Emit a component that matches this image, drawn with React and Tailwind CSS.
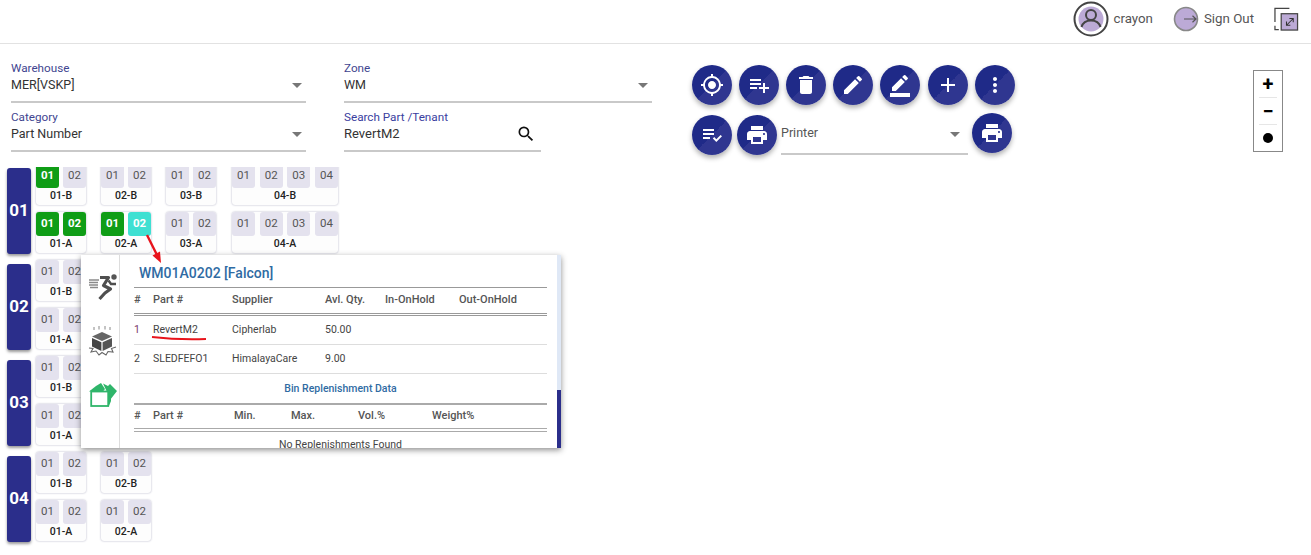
import React from "react";
import { MdGpsFixed, MdPlaylistAdd, MdDelete, MdEdit, MdBorderColor, MdAdd, MdMoreVert, MdPlaylistAddCheck, MdPrint, MdSearch, MdArrowDropDown } from "react-icons/md";

const F = "font-['Roboto',sans-serif]";

function RoundBtn({ icon: Icon, size = 24, cls = "" }) {
  return (
    <button className={`w-10 h-10 shrink-0 rounded-full flex items-center justify-center text-white bg-[linear-gradient(135deg,#1f2a88_0%,#1f2a88_50%,#2f3690_50%,#2f3690_100%)] shadow-[0_3px_5px_rgba(0,0,0,0.3)] ${cls}`}>
      <Icon size={size} />
    </button>
  );
}

function Field({ label, value, width, arrow = true, search = false, labelCls = "text-[#3f4590]", valueCls = "text-[12.5px]" }) {
  return (
    <div className={`${width} h-[42px] border-b-2 border-[#c9c9c9]`}>
      <div className={`text-[11.7px] leading-[14px] ${labelCls}`}>{label}</div>
      <div className={`flex items-center justify-between h-[18px] leading-[18px] text-[#333] mt-px ${valueCls}`}>
        <span>{value}</span>
        {arrow && <MdArrowDropDown size={24} className="text-[#777] -mr-[3px]" />}
        {search && <MdSearch size={20} className="text-[#111] mr-[5px]" />}
      </div>
    </div>
  );
}

function Cell({ v, state }) {
  const c =
    state === "g"
      ? "bg-[#0f9d16] text-white font-bold"
      : state === "c"
      ? "bg-[#3fe0d2] text-white font-bold"
      : "bg-[#e4e2ee] text-[#555]";
  return <div className={`w-[23px] h-6 rounded-[3px] flex items-center justify-center text-[11.5px] ${c}`}>{v}</div>;
}

function Rack({ name, cells, states = {} }) {
  return (
    <div className="h-[41px] rounded-[3px] shadow-[0_0_2px_rgba(60,60,110,0.45)] bg-[#fdfdfd]">
      <div className="flex justify-between">
        {cells.map((v) => (
          <Cell key={v} v={v} state={states[v]} />
        ))}
      </div>
      <div className="text-center text-[10.5px] font-medium leading-[16px] text-[#222]">{name}</div>
    </div>
  );
}

const two = ["01", "02"];
const four = ["01", "02", "03", "04"];

function Aisle({ id, columns }) {
  return (
    <div className="flex h-[90px] mb-[6px] pl-[7px]">
      <div className="w-6 h-[86px] self-end rounded-[3px] bg-[#2b2e8b] text-white font-bold text-[17px] flex items-center justify-center shadow-[0_2px_3px_rgba(0,0,0,0.4)]">
        {id}
      </div>
      <div className="ml-[5px] flex">
        {columns.map((c, i) => (
          <div key={i} className={`flex flex-col gap-[7px] ${c.w} ${c.ml}`}>
            <Rack name={c.b} cells={c.cells} states={c.bs} />
            <Rack name={c.a} cells={c.cells} states={c.as} />
          </div>
        ))}
      </div>
    </div>
  );
}

const col = (n, extra = {}) => ({ b: `${n}-B`, a: `${n}-A`, cells: two, w: "w-[50px]", ml: n === "01" ? "ml-0" : "ml-[15px]", ...extra });

function Runner() {
  return (
    <svg width="30" height="30" viewBox="0 0 30 30" fill="none">
      <circle cx="26" cy="5" r="2.7" fill="#555" />
      <path d="M12 5.5 H20.5 L15.5 13.5 L22.5 17 L17 21 L11.5 27" stroke="#4f4f4f" strokeWidth="3.2" strokeLinejoin="round" />
      <path d="M20.5 8.5 L23 12 H28" stroke="#4f4f4f" strokeWidth="2.4" />
      <path d="M1 8h10M1 10.5h9M1 13h9M2 15.5h8" stroke="#8a8a8a" strokeWidth="1.4" />
    </svg>
  );
}

function BreakBox() {
  return (
    <svg width="30" height="30" viewBox="0 0 30 30" fill="none">
      <path d="M14 6 L24 10.5 L14 15 L4 10.5 Z" fill="#666" />
      <path d="M4 12 L13.4 16.2 V25 L4 20.5 Z" fill="#454545" />
      <path d="M24 12 L14.6 16.2 V25 L24 20.5 Z" fill="#555" />
      <path d="M6 1v3M11 0v3.5M17 0v3.5M22 1v3" stroke="#888" strokeWidth="1" />
      <path d="M1 22 L5 22.5 L3 26 L8 25 L11 29 L14 26.5 L18 29 L20 25.5 L25 26 L23.5 22.5 L28 21" stroke="#666" strokeWidth="1.1" />
    </svg>
  );
}

function GreenBox() {
  return (
    <svg width="30" height="27" viewBox="0 0 30 27" fill="none">
      <path d="M1 9.5 L8 4 L13 1 L17 7 L15 9.5 Z" fill="#2fb56a" />
      <path d="M15 1.5 L20 4 L22 2 L29 9 L22 18 L19 10 Z" fill="#2fb56a" />
      <rect x="3.2" y="9.5" width="17" height="14.5" fill="#fff" stroke="#2fb56a" strokeWidth="1.8" />
      <path d="M21 14 L23 15 V19 L21 24 Z" fill="#2fb56a" />
    </svg>
  );
}

const cols1 = "grid grid-cols-[19px_79px_93px_60px_74px_1fr]";
const cols2 = "grid grid-cols-[19px_81px_57px_67px_74px_1fr]";

function Popover() {
  return (
    <div className="absolute left-[81px] top-[255px] w-[480px] h-[193px] bg-white shadow-[0_2px_6px_rgba(0,0,0,0.45)] flex overflow-hidden z-10">
      <div className="w-[39px] shrink-0 border-r border-[#ddd] flex flex-col items-center pt-[17px] pl-[6px]">
        <Runner />
        <div className="mt-[24px]"><BreakBox /></div>
        <div className="mt-[26px]"><GreenBox /></div>
      </div>
      <div className="flex-1 pl-[14px] pr-[10px] pt-[9px] min-w-0">
        <div className="pl-[5px] text-[14px] font-medium leading-[18px] text-[#2f6ba3]">WM01A0202 [Falcon]</div>
        <div className="mt-[5px] border-t border-[#999]">
          <div className={`${cols1} h-[28px] items-center text-[11px] font-medium text-[#555] border-b-[3px] border-double border-[#999]`}>
            <span>#</span><span>Part #</span><span>Supplier</span><span>Avl. Qty.</span><span>In-OnHold</span><span>Out-OnHold</span>
          </div>
          <div className={`${cols1} h-[29px] items-center text-[10.5px] text-[#444] border-b border-[#ddd]`}>
            <span className="text-[#7a3a6a]">1</span><span>RevertM2</span><span>Cipherlab</span><span>50.00</span>
          </div>
          <div className={`${cols1} h-[29px] items-center text-[10.5px] text-[#444] border-b border-[#ddd]`}>
            <span>2</span><span>SLEDFEFO1</span><span>HimalayaCare</span><span>9.00</span>
          </div>
        </div>
        <div className="h-[29px] flex items-center justify-center text-[10.5px] font-medium text-[#2f6ba3]">Bin Replenishment Data</div>
        <div className="border-t-2 border-[#aaa]">
          <div className={`${cols2} h-[27px] items-center text-[11px] font-medium text-[#555] border-b-4 border-double border-[#aaa]`}>
            <span>#</span><span>Part #</span><span>Min.</span><span>Max.</span><span>Vol.%</span><span>Weight%</span>
          </div>
          <div className="h-[26px] flex items-center justify-center text-[10.5px] text-[#444]">No Replenishments Found</div>
        </div>
      </div>
      <div className="w-[4px] shrink-0 flex flex-col">
        <div className="h-[135px] bg-[#dfe8f6]" />
        <div className="flex-1 bg-[#2b2e8b]" />
      </div>
    </div>
  );
}

export default function App() {
  return (
    <div className={`${F} relative w-[1311px] h-[555px] bg-white overflow-hidden`}>
      <header className="h-11 border-b border-[#e2e2e2] flex items-center justify-end pr-[12px] text-[13.3px] text-[#555]">
        <svg width="36" height="36" viewBox="0 0 36 36" fill="none" className="mb-[6px]">
          <circle cx="18" cy="18" r="16.5" fill="#fff" stroke="#444" strokeWidth="2" />
          <circle cx="18" cy="18" r="12.5" fill="#bcaad6" />
          <circle cx="18" cy="14" r="5" fill="none" stroke="#444" strokeWidth="2" />
          <path d="M8.5 26c1.5-5 5-6.5 9.5-6.5s8 1.5 9.5 6.5" fill="none" stroke="#444" strokeWidth="2" />
        </svg>
        <span className="ml-[4px] mb-[6px]">crayon</span>
        <svg width="26" height="26" viewBox="0 0 26 26" fill="none" className="ml-[20px] mb-[6px]">
          <circle cx="13" cy="13" r="11.5" fill="#bcaad6" stroke="#888" strokeWidth="1.6" />
          <path d="M11 13h12M19.5 9.8 23 13l-3.5 3.2" stroke="#555" strokeWidth="1.2" />
        </svg>
        <span className="ml-[5px] mb-[6px]">Sign Out</span>
        <svg width="25" height="26" viewBox="0 0 26 26" fill="none" className="ml-[20px] mb-[6px]">
          <path d="M1 16V2h15M1 20v4h4" stroke="#444" strokeWidth="1.3" />
          <rect x="7.5" y="7.5" width="17" height="17" fill="#bcaad6" stroke="#444" strokeWidth="1.3" />
          <path d="M13 19.5 19.5 13M16 12.5h4v4M13 15.5v4h4" stroke="#333" strokeWidth="1.1" />
        </svg>
      </header>

      <div className="flex pt-[17px] h-[123px]">
        <div className="ml-[11px] w-[641px] flex flex-col gap-[7px]">
          <div className="flex justify-between">
            <Field label="Warehouse" value="MER[VSKP]" width="w-[295px]" />
            <Field label="Zone" value="WM" width="w-[308px]" />
          </div>
          <div className="flex">
            <Field label="Category" value="Part Number" width="w-[295px]" />
            <div className="ml-[38px]">
              <Field label="Search Part /Tenant" value="RevertM2" width="w-[197px]" arrow={false} search labelCls="text-[#3a40a0]" valueCls="text-[13px]" />
            </div>
          </div>
        </div>
        <div className="ml-[40px] flex flex-col gap-[9px] pt-[4px]">
          <div className="flex gap-[7px]">
            <RoundBtn icon={MdGpsFixed} />
            <RoundBtn icon={MdPlaylistAdd} />
            <RoundBtn icon={MdDelete} />
            <RoundBtn icon={MdEdit} />
            <RoundBtn icon={MdBorderColor} />
            <RoundBtn icon={MdAdd} cls="ml-px" />
            <RoundBtn icon={MdMoreVert} />
          </div>
          <div className="flex items-center">
            <RoundBtn icon={MdPlaylistAddCheck} />
            <RoundBtn icon={MdPrint} cls="ml-[5px]" />
            <div className="ml-[4px] w-[187px] h-[41px] border-b-2 border-[#c9c9c9] flex items-center justify-between text-[12.5px] text-[#555]">
              <span>Printer</span>
              <MdArrowDropDown size={24} className="text-[#777] mr-px" />
            </div>
            <RoundBtn icon={MdPrint} cls="ml-[4px] -mt-[3px]" />
          </div>
        </div>
        <div className="ml-[238px] mt-[9px] w-[30px] h-[82px] border border-[#888] flex flex-col items-center text-black">
          <div className="h-[26px] w-full flex items-center justify-center text-[20px] font-bold leading-none">+</div>
          <div className="w-[18px] border-t border-[#e6e6e6]" />
          <div className="h-[26px] w-full flex items-center justify-center text-[20px] font-bold leading-none">−</div>
          <div className="w-[18px] border-t border-[#e6e6e6]" />
          <div className="flex-1 w-full flex items-center justify-center">
            <div className="w-[10px] h-[10px] rounded-full bg-black" />
          </div>
        </div>
      </div>

      <div className="h-[388px] overflow-hidden">
        <div className="-mt-[3px]">
          <Aisle id="01" columns={[
            col("01", { bs: { "01": "g" }, as: { "01": "g", "02": "g" } }),
            col("02", { as: { "01": "g", "02": "c" } }),
            col("03"),
            { b: "04-B", a: "04-A", cells: four, w: "w-[106px]", ml: "ml-[16px]" },
          ]} />
          <Aisle id="02" columns={[col("01"), col("02"), col("03")]} />
          <Aisle id="03" columns={[col("01"), col("02"), col("03")]} />
          <Aisle id="04" columns={[col("01"), col("02")]} />
        </div>
      </div>

      <Popover />

      <svg width="1311" height="555" className="absolute inset-0 z-20 pointer-events-none" fill="none">
        <path d="M147 235 L157 255" stroke="#e8141c" strokeWidth="2.4" />
        <path d="M161 263 L152.5 255.5 L160 251.5 Z" fill="#e8141c" />
        <path d="M152 337 Q178 340 206 339" stroke="#e8141c" strokeWidth="2" />
      </svg>
    </div>
  );
}
